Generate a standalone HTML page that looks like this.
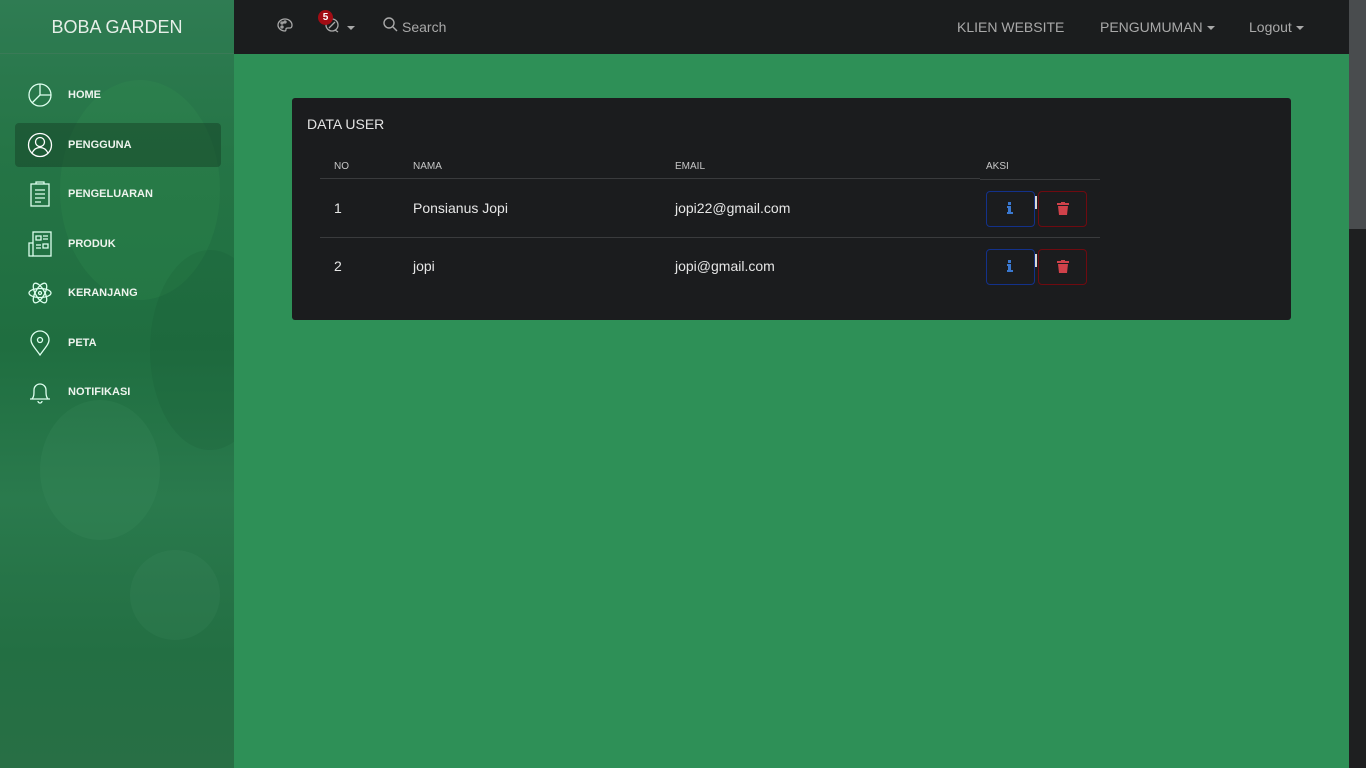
<!DOCTYPE html>
<html><head><meta charset="utf-8"><style>
*{box-sizing:border-box;margin:0;padding:0}
body{width:1366px;height:768px;overflow:hidden;background:#2e9057;font-family:"Liberation Sans",sans-serif;position:relative}
.side{position:absolute;left:0;top:0;width:234px;height:768px;background:linear-gradient(180deg,#2f7c53 0%,#257546 20%,#1f6e40 45%,#2a7a4d 65%,#236f43 85%,#286f45 100%);overflow:hidden}
.side .blob{position:absolute;border-radius:50%;opacity:.15}
.logo{height:54px;border-bottom:1px solid #3a7a57;color:#e6efe8;font-size:18px;text-align:center;line-height:54px;position:relative}
.nav{position:relative}
.item{position:absolute;left:15px;width:206px;height:44px;display:flex;align-items:center}
.item.act{background:rgba(20,60,35,.45);border-radius:4px}
.item svg{position:absolute;left:12px}
.item span{position:absolute;left:53px;color:#eef4ee;font-size:11px;font-weight:bold}
.top{position:absolute;left:234px;top:0;width:1115px;height:54px;background:#1b1d1e}
.top .t{position:absolute;top:19px;color:#a9a9a9;font-size:14px}
.caret{display:inline-block;border-top:4px solid #a9a9a9;border-left:4px solid transparent;border-right:4px solid transparent;vertical-align:middle;margin-left:4px}
.scroll{position:absolute;left:1349px;top:0;width:17px;height:768px;background:#1e1f20}
.scroll div{height:229px;background:#494c4e}
.card{position:absolute;left:292px;top:98px;width:999px;height:222px;background:#1b1c1e;border-radius:3px}
.card h3{position:absolute;left:15px;top:18px;font-weight:normal;font-size:14px;color:#e4e4e4}
.c{position:absolute;color:#e6e6e6;font-size:14px}
.h{position:absolute;color:#c8c8c8;font-size:10px;top:63px}
.line{position:absolute;left:28px;width:780px;height:1px;background:#3a3b3d}
.btn{position:absolute;width:49px;height:36px;border-radius:4px;border:1px solid}
.bi{border-color:#13318a;left:694px}
.bd{border-color:#6f0a10;left:746px}
.bar{position:absolute;left:743px;width:2px;height:13px;background:#d8d8d8}
</style></head><body>
<div class="side">
<div class="blob" style="left:60px;top:80px;width:160px;height:220px;background:#3aa25a"></div>
<div class="blob" style="left:150px;top:250px;width:120px;height:200px;background:#134f2c"></div>
<div class="blob" style="left:40px;top:400px;width:120px;height:140px;background:#4a9a6a"></div>
<div class="blob" style="left:130px;top:550px;width:90px;height:90px;background:#4b946a"></div>
<div class="logo">BOBA GARDEN</div>
<div class="nav">
<div class="item" style="top:19px"><svg width="26" height="26" viewBox="0 0 26 26" fill="none" stroke="#dfe" stroke-width="1.3"><circle cx="13" cy="13" r="11"/><path d="M13 2V13H24M13 13L5 21"/></svg><span>HOME</span></div>
<div class="item act" style="top:69px"><svg width="26" height="26" viewBox="0 0 26 26" fill="none" stroke="#fff" stroke-width="1.3"><circle cx="13" cy="13" r="11.5"/><circle cx="13" cy="10" r="4.5"/><path d="M5 21c2-4 5-5.5 8-5.5s6 1.5 8 5.5"/></svg><span>PENGGUNA</span></div>
<div class="item" style="top:118px"><svg width="26" height="26" viewBox="0 0 26 26" fill="none" stroke="#dfe" stroke-width="1.3"><rect x="4" y="3" width="18" height="22"/><path d="M9 3V1h8v2M8 9h10M8 13h10M8 17h10M8 21h6"/></svg><span>PENGELUARAN</span></div>
<div class="item" style="top:168px"><svg width="26" height="26" viewBox="0 0 26 26" fill="none" stroke="#dfe" stroke-width="1.3"><rect x="6" y="1" width="18" height="24"/><path d="M6 12H2v13h4M9 5h5v4H9zM16 5h5M16 8h5M9 14h5M16 13h5v4h-5zM9 17h5"/></svg><span>PRODUK</span></div>
<div class="item" style="top:217px"><svg width="26" height="26" viewBox="0 0 26 26" fill="none" stroke="#dfe" stroke-width="1.3"><ellipse cx="13" cy="13" rx="11" ry="4.5"/><ellipse cx="13" cy="13" rx="11" ry="4.5" transform="rotate(60 13 13)"/><ellipse cx="13" cy="13" rx="11" ry="4.5" transform="rotate(-60 13 13)"/><circle cx="13" cy="13" r="1.5"/></svg><span>KERANJANG</span></div>
<div class="item" style="top:267px"><svg width="26" height="26" viewBox="0 0 26 26" fill="none" stroke="#dfe" stroke-width="1.3"><path d="M13 25C8 18 4 14 4 10a9 9 0 0 1 18 0c0 4-4 8-9 15z"/><circle cx="13" cy="10" r="2.5"/></svg><span>PETA</span></div>
<div class="item" style="top:316px"><svg width="26" height="26" viewBox="0 0 26 26" fill="none" stroke="#dfe" stroke-width="1.3"><path d="M5 20c2-2 2-5 2-9a6 6 0 0 1 12 0c0 4 0 7 2 9zM3 20h20M11 22a2 2 0 0 0 4 0"/></svg><span>NOTIFIKASI</span></div>
</div></div>
<div class="top">
<svg style="position:absolute;left:43px;top:17px" width="16" height="16" viewBox="0 0 16 16" fill="none" stroke="#a9a9a9" stroke-width="1.3"><path d="M8 2C4 2 1 5 1 8c0 3 3 6 7 6 1 0 1-1 1-2s1-1 2-1h2c2 0 2-2 2-3 0-3-3-6-7-6z"/><circle cx="5" cy="6" r="1"/><circle cx="8" cy="5" r="1"/><circle cx="5" cy="10" r="1"/></svg>
<svg style="position:absolute;left:90px;top:17px" width="16" height="16" viewBox="0 0 16 16" fill="none" stroke="#a9a9a9" stroke-width="1.3"><circle cx="8" cy="8" r="6"/><path d="M5 11l6-6M11 13l3 2"/></svg>
<div style="position:absolute;left:84px;top:10px;width:15px;height:15px;border-radius:50%;background:#a20c14;color:#fff;font-size:10px;font-weight:bold;text-align:center;line-height:15px">5</div>
<span class="caret" style="position:absolute;left:109px;top:26px"></span>
<svg style="position:absolute;left:149px;top:17px" width="15" height="15" viewBox="0 0 15 15" fill="none" stroke="#a9a9a9" stroke-width="1.4"><circle cx="6" cy="6" r="5"/><path d="M10 10l4 4"/></svg>
<span class="t" style="left:168px">Search</span>
<span class="t" style="left:723px">KLIEN WEBSITE</span>
<span class="t" style="left:866px">PENGUMUMAN<span class="caret"></span></span>
<span class="t" style="left:1015px">Logout<span class="caret"></span></span>
</div>
<div class="scroll"><div></div></div>
<div class="card">
<h3>DATA USER</h3>
<span class="h" style="left:42px">NO</span><span class="h" style="left:121px">NAMA</span><span class="h" style="left:383px">EMAIL</span><span class="h" style="left:694px">AKSI</span>
<div class="line" style="top:80px;width:660px"></div><div class="line" style="top:81px;left:688px;width:120px"></div>
<span class="c" style="left:42px;top:102px">1</span><span class="c" style="left:121px;top:102px">Ponsianus Jopi</span><span class="c" style="left:383px;top:102px">jopi22@gmail.com</span>
<div class="line" style="top:139px"></div>
<span class="c" style="left:42px;top:160px">2</span><span class="c" style="left:121px;top:160px">jopi</span><span class="c" style="left:383px;top:160px">jopi@gmail.com</span>
<div class="btn bi" style="top:93px"></div><div class="bar" style="top:98px"></div><div class="btn bd" style="top:93px"></div>
<div class="btn bi" style="top:151px"></div><div class="bar" style="top:156px"></div><div class="btn bd" style="top:151px"></div>
<svg style="position:absolute;left:715px;top:104px" width="6" height="12" viewBox="0 0 6 12" fill="#3a78d0"><rect x="1" y="0" width="3" height="3"/><path d="M0 4h4v6h2v2H0v-2h1V6H0z"/></svg>
<svg style="position:absolute;left:715px;top:162px" width="6" height="12" viewBox="0 0 6 12" fill="#3a78d0"><rect x="1" y="0" width="3" height="3"/><path d="M0 4h4v6h2v2H0v-2h1V6H0z"/></svg>
<svg style="position:absolute;left:765px;top:104px" width="12" height="13" viewBox="0 0 12 13" fill="#d0414a"><path d="M4 0h4v1h4v2H0V1h4zM1 4h10l-1 9H2z"/></svg>
<svg style="position:absolute;left:765px;top:162px" width="12" height="13" viewBox="0 0 12 13" fill="#d0414a"><path d="M4 0h4v1h4v2H0V1h4zM1 4h10l-1 9H2z"/></svg>
</div>
</body></html>
